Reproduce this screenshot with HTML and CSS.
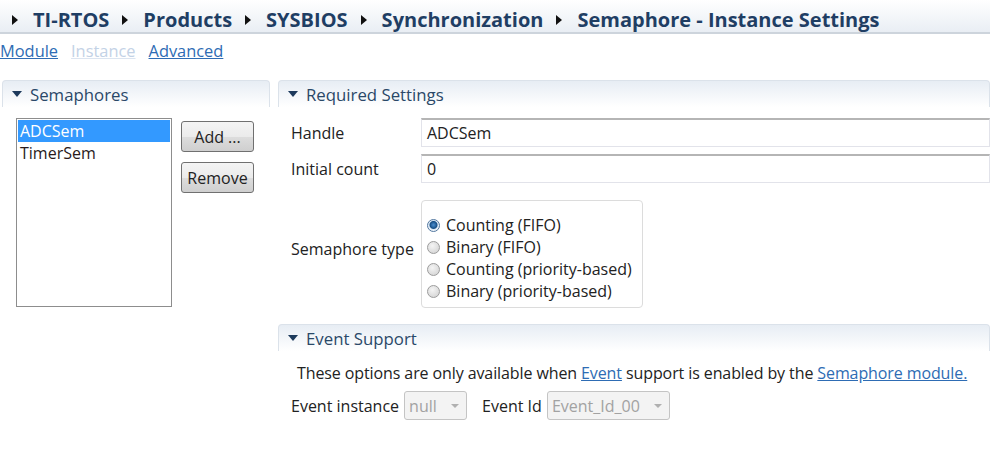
FILE: index.html
```html
<!DOCTYPE html>
<html lang="en">
<head>
    <meta charset="UTF-8">
    <title>Semaphore - Instance Settings</title>
    <link rel="stylesheet" href="styles.css">
</head>
<body>
    <header class="crumbs">
        <span class="crumb"><svg class="tri" viewBox="0 0 6 10"><path d="M0 0 L6 5 L0 10 Z"/></svg>TI-RTOS</span>
        <span class="crumb"><svg class="tri" viewBox="0 0 6 10"><path d="M0 0 L6 5 L0 10 Z"/></svg>Products</span>
        <span class="crumb"><svg class="tri" viewBox="0 0 6 10"><path d="M0 0 L6 5 L0 10 Z"/></svg>SYSBIOS</span>
        <span class="crumb"><svg class="tri" viewBox="0 0 6 10"><path d="M0 0 L6 5 L0 10 Z"/></svg>Synchronization</span>
        <span class="crumb"><svg class="tri" viewBox="0 0 6 10"><path d="M0 0 L6 5 L0 10 Z"/></svg>Semaphore - Instance Settings</span>
    </header>

    <nav class="tabs">
        <a href="#">Module</a>
        <a href="#" class="off">Instance</a>
        <a href="#">Advanced</a>
    </nav>

    <main class="panes">
        <section class="sec sec-left">
            <div class="sec-head"><svg class="down" viewBox="0 0 10 6"><path d="M0 0 L10 0 L5 6 Z"/></svg>Semaphores</div>
            <div class="inst">
                <ul class="list">
                    <li class="sel">ADCSem</li>
                    <li>TimerSem</li>
                </ul>
                <div class="btns">
                    <button class="btn">Add ...</button>
                    <button class="btn">Remove</button>
                </div>
            </div>
        </section>

        <div class="right">
            <section class="sec">
                <div class="sec-head"><svg class="down" viewBox="0 0 10 6"><path d="M0 0 L10 0 L5 6 Z"/></svg>Required Settings</div>
                <div class="form">
                    <label class="lbl">Handle</label>
                    <div class="field">ADCSem</div>
                    <label class="lbl">Initial count</label>
                    <div class="field">0</div>
                    <label class="lbl">Semaphore type</label>
                    <div class="radios">
                        <div class="radio on"><span class="dot"></span>Counting (FIFO)</div>
                        <div class="radio"><span class="dot"></span>Binary (FIFO)</div>
                        <div class="radio"><span class="dot"></span>Counting (priority-based)</div>
                        <div class="radio"><span class="dot"></span>Binary (priority-based)</div>
                    </div>
                </div>
            </section>

            <section class="sec">
                <div class="sec-head"><svg class="down" viewBox="0 0 10 6"><path d="M0 0 L10 0 L5 6 Z"/></svg>Event Support</div>
                <p class="note">These options are only available when <a href="#">Event</a> support is enabled by the <a href="#">Semaphore module.</a></p>
                <div class="evrow">
                    <span>Event instance</span>
                    <div class="combo w-null">null<span class="caret"></span></div>
                    <span class="gap">Event Id</span>
                    <div class="combo w-id">Event_Id_00<span class="caret"></span></div>
                </div>
            </section>
        </div>
    </main>
</body>
</html>
```

FILE: styles.css
```css
body {
    margin: 0;
    background: #fff;
    font-family: "Open Sans", "Noto Sans", sans-serif;
    font-size: 16px;
    color: #222;
}

/* breadcrumb title bar */
.crumbs {
    display: flex;
    align-items: center;
    height: 34px;
    width: 990px;
    padding: 7px 0 0 12px;
    box-sizing: border-box;
    background: linear-gradient(#ffffff, #e9eef4);
    border-bottom: 2px solid #cdd4dc;
    font-size: 20px;
    font-weight: bold;
    color: #1f3e64;
}

.crumb {
    display: flex;
    align-items: center;
    margin-right: 13px;
}

.tri {
    width: 6px;
    height: 10px;
    fill: #111;
    margin-right: 15px;
}

/* tab links */
.tabs {
    display: flex;
    gap: 13px;
    height: 32px;
    align-items: center;
    font-size: 16.4px;
}

.tabs a {
    color: #2e6cb4;
}

.tabs a.off {
    color: #c3d2e6;
    text-decoration-color: #dbe4f0;
}

/* panes */
.panes {
    display: flex;
    gap: 8px;
    padding: 14px 9px 0 2px;
}

.sec-head {
    display: flex;
    align-items: center;
    height: 27px;
    padding-left: 9px;
    border: 1px solid #dbe2ea;
    border-bottom: none;
    border-radius: 4px 4px 0 0;
    background: linear-gradient(#e7edf4, #ffffff);
    font-size: 16.8px;
    color: #2a4868;
    box-sizing: border-box;
}

.down {
    width: 10px;
    height: 6px;
    fill: #1d3a5c;
    margin-right: 8px;
}

.sec-left {
    width: 268px;
    flex: none;
}

.inst {
    display: flex;
    gap: 9px;
    padding: 11px 0 0 14px;
}

.list {
    list-style: none;
    margin: 0;
    padding: 1px;
    width: 156px;
    height: 189px;
    box-sizing: border-box;
    border: 1px solid #8d8d8d;
}

.list li {
    height: 22px;
    line-height: 22px;
    padding-left: 2px;
    color: #2a1a1a;
}

.list li.sel {
    background: #3399ff;
    color: #fff;
}

.btns {
    display: flex;
    flex-direction: column;
    gap: 10px;
    padding-top: 3px;
}

.btn {
    width: 73px;
    height: 31px;
    font-family: inherit;
    font-size: 16px;
    color: #222;
    border: 1px solid #707070;
    border-radius: 3px;
    background: linear-gradient(#f4f4f4 0%, #ebebeb 50%, #dddddd 51%, #cfcfcf 100%);
    padding: 0;
}

.right {
    flex: 1;
    display: flex;
    flex-direction: column;
    gap: 16px;
}

/* required settings form */
.form {
    display: grid;
    grid-template-columns: 130px 1fr;
    row-gap: 7px;
    align-items: center;
    padding: 11px 0 0 13px;
}

.field {
    height: 29px;
    line-height: 26px;
    box-sizing: border-box;
    padding-left: 5px;
    border: 1px solid #e2e3ea;
    border-top-color: #b5b5b5;
    border-top-width: 2px;
}

.radios {
    margin-top: 10px;
    width: 222px;
    height: 108px;
    box-sizing: border-box;
    padding: 13px 0 0 5px;
    border: 1px solid #dcdcdc;
    border-radius: 4px;
}

.radio {
    display: flex;
    align-items: center;
    height: 22px;
}

.dot {
    width: 11px;
    height: 11px;
    border-radius: 50%;
    border: 1px solid #9c9c9c;
    background: radial-gradient(circle at 40% 35%, #f4f4f4, #cfcfcf);
    margin-right: 6px;
    box-sizing: content-box;
}

.radio.on .dot {
    border-color: #52779f;
    background: radial-gradient(circle at 50% 45%, #4d8fd0 0, #164f86 3.5px, #dbe8f5 4.5px, #f6f9fc 6px);
}

/* event support */
.note {
    margin: 10px 0 0 19px;
    font-size: 16px;
    letter-spacing: -0.1px;
    line-height: 24px;
}

.note a {
    color: #2e6cb4;
}

.evrow {
    display: flex;
    align-items: center;
    padding: 6px 0 0 13px;
}

.combo {
    display: flex;
    align-items: center;
    justify-content: space-between;
    height: 29px;
    box-sizing: border-box;
    margin-left: 5px;
    padding: 0 7px 0 4px;
    border: 1px solid #c4c4c4;
    border-radius: 3px;
    background: #f3f3f3;
    color: #a2a2a2;
}

.w-null { width: 63px; }
.w-id { width: 123px; }

.gap {
    margin-left: 15px;
}

.caret {
    width: 0;
    height: 0;
    border-left: 4px solid transparent;
    border-right: 4px solid transparent;
    border-top: 4px solid #b0b0b0;
}
```
